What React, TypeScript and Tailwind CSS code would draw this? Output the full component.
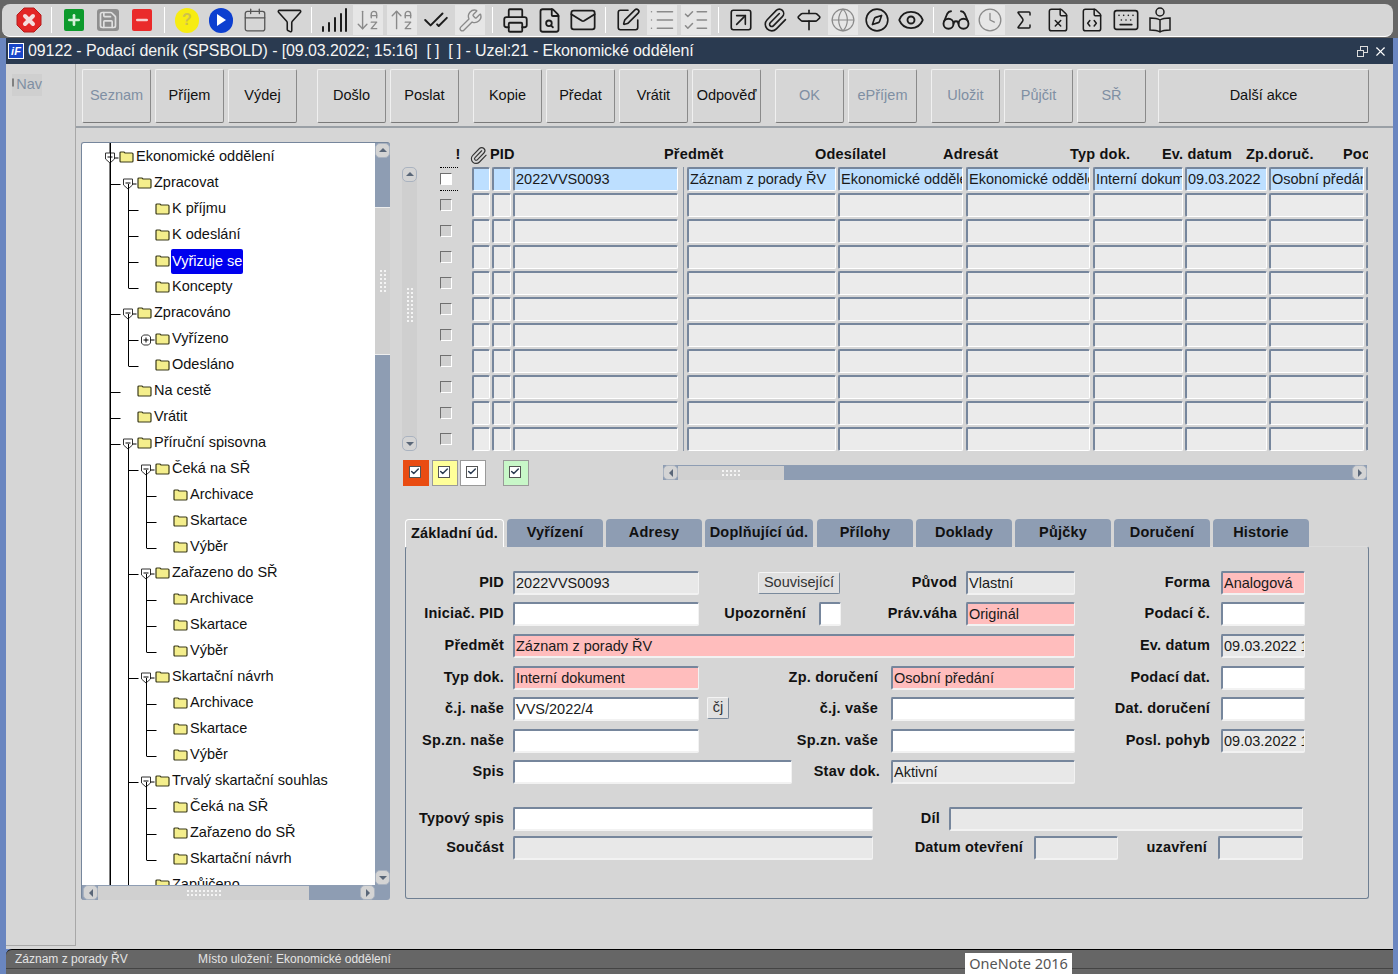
import React from "react";
import {
  Save, Plus, Minus, Calendar, Funnel, ArrowDownAZ, ArrowUpAZ, CheckCheck, Wrench, Printer, FileSearch, Mail, SquarePen,
  List, ListChecks, SquareArrowUpRight, Paperclip, Signpost, Globe, Compass, Eye, Glasses, Clock, Sigma, FileX, FileCode, Keyboard, BookOpen, X, ChevronUp, Check,
} from "lucide-react";

const Sep = () => <div className="w-px h-[26px] mx-[5px] bg-[#9a9a9a] border-r border-white shrink-0" />;

const Ti = ({ children, light }: { children: React.ReactNode; light?: boolean }) => (
  <div className="w-[34px] h-[32px] flex items-center justify-center shrink-0">
    <div className={"w-[30px] h-[30px] flex items-center justify-center " + (light ? "bg-[#e6e6e6] text-[#8a8a8a]" : "text-[#1c1c1c]")}>{children}</div>
  </div>
);

const Signal = () => (
  <svg width="30" height="30" viewBox="0 0 30 30" stroke="#1c1c1c" strokeWidth="2" strokeLinecap="round">
    <path d="M4 26v-4M10 26v-8M16 26v-13M22 26v-17M27 26v-22" />
  </svg>
);

const Toolbar = () => (
  <div className="h-[38px] bg-[#666666] pt-[4px] pl-[2px] pr-[5px] shrink-0">
    <div className="h-[33px] bg-[#d6d6d6] rounded-[8px] border-b border-white flex items-center pl-[10px]">
      <Ti>
        <svg width="28" height="28" viewBox="0 0 28 28"><path d="M9 2h10l7 7v10l-7 7H9l-7-7V9z" fill="#e32626" stroke="#b51c1c" /><path d="M10 10l8 8M18 10l-8 8" stroke="#f4dede" strokeWidth="4" strokeLinecap="round" /></svg>
      </Ti>
      <Sep />
      <Ti><div className="w-[20px] h-[22px] rounded-[2px] bg-[#0d9a2c] flex items-center justify-center"><Plus size={16} strokeWidth={4} className="text-[#d5f0d8]" /></div></Ti>
      <Ti><div className="w-[22px] h-[22px] rounded-[3px] bg-[#8f8f8f] flex items-center justify-center"><Save size={20} className="text-[#e0e0e0]" /></div></Ti>
      <Ti><div className="w-[20px] h-[22px] rounded-[2px] bg-[#ea2a2a] flex items-center justify-center"><Minus size={16} strokeWidth={4} className="text-[#f7cfcf]" /></div></Ti>
      <Sep />
      <Ti><div className="w-[24px] h-[25px] rounded-full bg-[#f7ec12] flex items-center justify-center font-bold text-[16px] text-[#cfc24a]">?</div></Ti>
      <Ti><div className="w-[24px] h-[25px] rounded-full bg-[#0d3fd0] flex items-center justify-center"><svg width="14" height="14" viewBox="0 0 14 14"><path d="M3 1l9 6-9 6z" fill="#fff" /></svg></div></Ti>
      <Ti><Calendar size={26} strokeWidth={1.2} className="text-[#555555]" /></Ti>
      <Ti><Funnel size={27} strokeWidth={1.4} /></Ti>
      <Sep />
      <Ti><Signal /></Ti>
      <Ti light><ArrowDownAZ size={26} strokeWidth={1.3} /></Ti>
      <Ti light><ArrowUpAZ size={26} strokeWidth={1.3} /></Ti>
      <Ti><CheckCheck size={26} strokeWidth={1.8} /></Ti>
      <Ti light><Wrench size={25} strokeWidth={1.3} /></Ti>
      <Sep />
      <Ti><Printer size={27} strokeWidth={1.6} /></Ti>
      <Ti><FileSearch size={27} strokeWidth={1.6} /></Ti>
      <Ti><Mail size={28} strokeWidth={1.5} /></Ti>
      <Sep />
      <Ti><SquarePen size={26} strokeWidth={1.5} /></Ti>
      <Ti light><List size={28} strokeWidth={1.3} /></Ti>
      <Ti light><ListChecks size={28} strokeWidth={1.3} /></Ti>
      <Sep />
      <Ti><SquareArrowUpRight size={26} strokeWidth={1.5} /></Ti>
      <Ti><Paperclip size={26} strokeWidth={1.5} /></Ti>
      <Ti><Signpost size={26} strokeWidth={1.5} /></Ti>
      <Ti light><Globe size={26} strokeWidth={1.1} /></Ti>
      <Ti><Compass size={26} strokeWidth={1.5} /></Ti>
      <Ti><Eye size={28} strokeWidth={1.6} /></Ti>
      <Sep />
      <Ti><Glasses size={30} strokeWidth={1.5} /></Ti>
      <Ti light><Clock size={26} strokeWidth={1.2} /></Ti>
      <Ti><Sigma size={24} strokeWidth={1.5} /></Ti>
      <Ti><FileX size={26} strokeWidth={1.4} /></Ti>
      <Ti><FileCode size={26} strokeWidth={1.4} /></Ti>
      <Ti><Keyboard size={28} strokeWidth={1.4} /></Ti>
      <Ti>
        <svg width="28" height="28" viewBox="0 0 28 28" fill="none" stroke="#1c1c1c" strokeWidth="1.5"><circle cx="14" cy="6" r="4" /><path d="M14 14c-3-2-7-2-10-2v12c3 0 7 0 10 2 3-2 7-2 10-2V12c-3 0-7 0-10 2zM14 14v12" /></svg>
      </Ti>
    </div>
  </div>
);

const Title = () => (
  <div className="h-[26px] bg-[#2a3a50] flex items-center ml-[6px] mr-[5px] shrink-0 text-white">
    <div className="ml-[2px] w-[16px] h-[16px] bg-[#1846c8] border border-white flex items-center justify-center text-[11px] italic font-bold leading-none">iF</div>
    <span className="ml-[4px] text-[16px] tracking-[-0.1px] whitespace-pre text-[#f4f4f4]">09122 - Podací deník (SPSBOLD) - [09.03.2022; 15:16]  [ ]  [ ] - Uzel:21 - Ekonomické oddělení</span>
    <div className="ml-auto flex items-center gap-[5px] pr-[5px]">
      <div className="relative w-[11px] h-[11px]">
        <div className="absolute right-0 top-0 w-[8px] h-[7px] border border-[#dddddd]" />
        <div className="absolute left-0 bottom-0 w-[7px] h-[7px] border border-[#dddddd] bg-[#2a3a50]" />
      </div>
      <X size={15} strokeWidth={1.8} className="text-white" />
    </div>
  </div>
);

const Btn = ({ label, off, w = "w-[69px]" }: { label: string; off?: boolean; w?: string }) => (
  <div className={w + " h-[54px] rounded-[2px] border border-t-[#f0f0f0] border-l-[#f0f0f0] border-r-[#8a8a8a] border-b-[#7a7a7a] bg-[#d6d6d6] flex items-center justify-center text-[14.5px] whitespace-nowrap " + (off ? "text-[#7f8fa3]" : "text-[#111111]")}>{label}</div>
);

const BarSep = () => <div className="w-px self-stretch -mt-[5px] bg-[#a3a3a3] border-r border-white box-content" />;

const ButtonBar = () => (
  <div className="h-[64px] border-b-2 border-b-[#9aa0a6] pt-[5px] pl-[6px] flex shrink-0">
    <div className="flex gap-[4px]"><Btn label="Seznam" off /><Btn label="Příjem" /><Btn label="Výdej" /></div>
    <div className="mx-[9px]"><BarSep /></div>
    <div className="flex gap-[4px]"><Btn label="Došlo" /><Btn label="Poslat" /></div>
    <div className="mx-[6px]"><BarSep /></div>
    <div className="flex gap-[4px]"><Btn label="Kopie" /><Btn label="Předat" /><Btn label="Vrátit" /><Btn label="Odpověď" /></div>
    <div className="mx-[6px]"><BarSep /></div>
    <div className="flex gap-[4px]"><Btn label="OK" off /><Btn label="ePříjem" off /></div>
    <div className="mx-[6px]"><BarSep /></div>
    <div className="flex gap-[4px]"><Btn label="Uložit" off /><Btn label="Půjčit" off /><Btn label="SŘ" off /></div>
    <div className="mx-[5px]"><BarSep /></div>
    <Btn label="Další akce" w="w-[211px]" />
  </div>
);

const Arrow = ({ dir }: { dir: "u" | "d" | "l" | "r" }) => {
  const p = { u: "M2 7l4-4 4 4z", d: "M2 4l4 4 4-4z", l: "M8 2l-4 4 4 4z", r: "M4 2l4 4-4 4z" }[dir];
  return (
    <div className="w-[15px] h-[15px] shrink-0 rounded-[5px] bg-[#d4d4d4] border border-[#aab3c0] flex items-center justify-center">
      <svg width="12" height="12" viewBox="0 0 12 12"><path d={p} fill="#5a6778" /></svg>
    </div>
  );
};

const Grip = ({ v, count }: { v?: boolean; count: number }) => (
  <div className={"flex flex-wrap gap-[2px] " + (v ? "w-[6px]" : "h-[6px] flex-col")}>
    {Array.from({ length: count }).map((_, i) => <div key={i} className="w-[2px] h-[2px] bg-[#f4f4f4]" />)}
  </div>
);

type Node = { t: string; l: number; s?: "-" | "+"; sel?: boolean };
const sub = (a: string[]): Node[] => a.map((t) => ({ t, l: 3 }));
const abc = () => sub(["Archivace", "Skartace", "Výběr"]);
const nodes: Node[] = [
  { t: "Ekonomické oddělení", l: 0, s: "-" },
  { t: "Zpracovat", l: 1, s: "-" },
  { t: "K příjmu", l: 2 },
  { t: "K odeslání", l: 2 },
  { t: "Vyřizuje se", l: 2, sel: true },
  { t: "Koncepty", l: 2 },
  { t: "Zpracováno", l: 1, s: "-" },
  { t: "Vyřízeno", l: 2, s: "+" },
  { t: "Odesláno", l: 2 },
  { t: "Na cestě", l: 1 },
  { t: "Vrátit", l: 1 },
  { t: "Příruční spisovna", l: 1, s: "-" },
  { t: "Čeká na SŘ", l: 2, s: "-" },
  ...abc(),
  { t: "Zařazeno do SŘ", l: 2, s: "-" },
  ...abc(),
  { t: "Skartační návrh", l: 2, s: "-" },
  ...abc(),
  { t: "Trvalý skartační souhlas", l: 2, s: "-" },
  ...sub(["Čeká na SŘ", "Zařazeno do SŘ", "Skartační návrh"]),
  { t: "Zapůjčeno", l: 2 },
];
const pads = ["pl-[37px]", "pl-[55px]", "pl-[73px]", "pl-[91px]"];

const Folder = () => (
  <svg width="15" height="12" viewBox="0 0 15 12" className="shrink-0">
    <path d="M1 3V2q0-1 1-1h3l1 1h7q1 0 1 1v7q0 1-1 1H2q-1 0-1-1z" fill="#f4ee8c" stroke="#3a3a1a" strokeWidth="1.2" />
  </svg>
);

const connectors = () => {
  const rowY = (i: number) => 15 + i * 26;
  const lx = (l: number) => 28 + 18 * l;
  const out: React.ReactNode[] = [];
  out.push(<path key="root" d={`M${lx(0)} 0V760`} stroke="#000" />);
  nodes.forEach((n, i) => {
    if (n.l > 0) {
      const x = lx(n.l - 1) + 0.5;
      let prev = i - 1;
      while (prev >= 0 && nodes[prev].l >= n.l) prev--;
      out.push(<path key={"h" + i} d={`M${x} ${rowY(i) + 0.5}H${x + 10}`} stroke="#000" fill="none" />);
      let p = i - 1;
      while (p >= 0 && nodes[p].l > n.l) p--;
      const from = p >= 0 && nodes[p].l === n.l ? rowY(p) : rowY(prev);
      out.push(<path key={"v" + i} d={`M${x} ${from}V${rowY(i)}`} stroke="#000" fill="none" />);
    }
    if (n.l === 1 || n.l === 2) {
      const last = nodes.findIndex((m, j) => j > i && m.l <= n.l);
      if (n.l === 1 && last === -1) out.push(<path key={"e" + i} d={`M${lx(1) + 0.5} ${rowY(i)}V760M${lx(0) + 0.5} 0V760`} stroke="#000" />);
    }
    if (n.s) {
      const x = lx(n.l);
      out.push(
        <g key={"s" + i} transform={`translate(${x - 4.5} ${rowY(i) - 5})`}>
          <path d={n.s === "-" ? "M0 0h9v6l-4.5 4L0 6z" : "M0 2l2-2h5l2 2v6l-2 2H2L0 8z"} fill="#fff" stroke="#333" />
          <path d={n.s === "-" ? "M2 4h5" : "M2 5h5M4.5 2.5v5"} stroke="#000" />
          <path d="M9 5h4" stroke="#000" />
        </g>
      );
    }
  });
  return out;
};

const Tree = () => (
  <div className="w-[309px] h-[758px] mt-[14px] ml-[5px] shrink-0 bg-[#8e9db3] rounded-[3px] border-t border-l border-t-[#76869c] border-l-[#76869c] flex flex-col overflow-hidden">
    <div className="flex h-[742px]">
      <div className="relative w-[294px] bg-white overflow-hidden pt-[1px]">
        <svg className="absolute left-0 top-0" width="294" height="760">{connectors()}</svg>
        <div className="relative">
          {nodes.map((n, i) => (
            <div key={i} className={"h-[26px] flex items-center gap-[2px] text-[14.5px] text-[#111111] whitespace-nowrap " + pads[n.l]}>
              <Folder />
              {n.sel ? <span className="bg-[#0000ee] text-white h-[25px] leading-[25px] px-[1px] -ml-[1px] rounded-[2px]">{n.t}</span> : <span>{n.t}</span>}
            </div>
          ))}
        </div>
      </div>
      <div className="w-[15px] flex flex-col bg-[#8e9db3]">
        <Arrow dir="u" />
        <div className="mt-[49px] h-[148px] bg-[#d0d0d0] border-y border-[#eeeeee] flex items-center justify-center"><Grip v count={12} /></div>
        <div className="flex-1" />
        <Arrow dir="d" />
      </div>
    </div>
    <div className="h-[15px] flex items-center pl-px pr-[15px]">
      <Arrow dir="l" />
      <div className="w-[211px] h-[14px] bg-[#d0d0d0] flex items-center justify-center"><Grip count={18} /></div>
      <div className="flex-1" />
      <Arrow dir="r" />
    </div>
  </div>
);

const cols = [
  { w: "w-[18px]", ml: "ml-0", h: "!", c: true },
  { w: "w-[19px]", ml: "ml-[2px]", h: "clip", c: true },
  { w: "w-[165px]", ml: "ml-[2px]", h: "PID", v: "2022VVS0093" },
  { w: "w-[149px]", ml: "ml-[3px]", h: "Předmět", v: "Záznam z porady ŘV", sep: true },
  { w: "w-[125px]", ml: "ml-[2px]", h: "Odesílatel", v: "Ekonomické oddělení" },
  { w: "w-[124px]", ml: "ml-[3px]", h: "Adresát", v: "Ekonomické oddělení" },
  { w: "w-[90px]", ml: "ml-[3px]", h: "Typ dok.", v: "Interní dokument" },
  { w: "w-[82px]", ml: "ml-[2px]", h: "Ev. datum", v: "09.03.2022" },
  { w: "w-[95px]", ml: "ml-[2px]", h: "Zp.doruč.", v: "Osobní předání" },
  { w: "w-[25px]", ml: "ml-[2px]", h: "Poc", v: "" },
];

const ColSep = () => <div className="w-px -my-px ml-[5px] bg-[#8a96a6]" />;

const Header = () => (
  <div className="h-[24px] flex pl-[47px] w-[966px] overflow-hidden items-center text-[14.5px] font-bold text-[#111111] tracking-[0.2px]">
    {cols.map((c, i) => (
      <React.Fragment key={i}>
        {c.sep && <div className="w-px ml-[5px]" />}
        <div className={c.w + " " + c.ml + " shrink-0 whitespace-nowrap " + (c.c ? "text-center" : "")}>
          {c.h === "clip" ? <Paperclip size={19} strokeWidth={1.4} className="mx-auto text-[#333333]" /> : c.h}
        </div>
      </React.Fragment>
    ))}
  </div>
);

const RowCheck = ({ on }: { on: boolean }) => (
  <div className={"w-[18px] ml-[23px] h-[24px] flex items-center shrink-0 " + (on ? "border-y border-dotted border-black" : "")}>
    <div className={"w-[12px] h-[12px] border border-t-[#6f6f6f] border-l-[#6f6f6f] border-r-white border-b-white " + (on ? "bg-white" : "bg-[#d0d0d0]")} />
  </div>
);

const Cell = ({ w, ml, v, on }: { w: string; ml: string; v?: string; on: boolean }) => (
  <div className={w + " " + ml + " h-[24px] shrink-0 overflow-hidden rounded-[2px] border-t-2 border-l-2 border-t-[#76869c] border-l-[#76869c] border-b border-r border-b-white border-r-white pl-px text-[14.5px] leading-[21px] whitespace-nowrap text-[#1a1a1a] " + (on ? "bg-[#bddfff]" : "bg-[#ebebeb]")}>{on ? v : ""}</div>
);

const Grid = () => (
  <div className="flex w-[966px] overflow-hidden">
    <div className="w-[15px] h-[284px] shrink-0 flex flex-col bg-[#cfcfcf] rounded-[5px]">
      <Arrow dir="u" />
      <div className="flex-1 flex items-center justify-center -mt-[8px]"><Grip v count={18} /></div>
      <Arrow dir="d" />
    </div>
    <div className="flex flex-col gap-[2px]">
      {Array.from({ length: 11 }).map((_, r) => (
        <div key={r} className="flex h-[24px]">
          <RowCheck on={r === 0} />
          <div className="w-[14px] shrink-0 -ml-[9px] mr-[9px]" />
          {cols.map((c, i) => (
            <React.Fragment key={i}>
              {c.sep && <ColSep />}
              <Cell w={c.w} ml={c.ml} v={c.v} on={r === 0} />
            </React.Fragment>
          ))}
        </div>
      ))}
    </div>
  </div>
);

const Swatch = ({ cls }: { cls: string }) => (
  <div className={"h-[26px] border border-[#9a9a9a] flex items-center justify-center shrink-0 " + cls}>
    <div className="w-[12px] h-[12px] border border-[#555555] bg-white flex items-center justify-center -mt-[3px] -ml-[3px]">
      <Check size={11} strokeWidth={3.5} className="text-[#2a3a50]" />
    </div>
  </div>
);

const SwatchRow = () => (
  <div className="flex mt-[9px] items-start">
    <Swatch cls="w-[26px] ml-px bg-[#e94c12] border-[#e94c12]" />
    <Swatch cls="w-[26px] ml-[3px] bg-[#ffff99]" />
    <Swatch cls="w-[26px] ml-[2px] bg-white" />
    <Swatch cls="w-[26px] ml-[17px] bg-[#c8f7c8]" />
    <div className="ml-[134px] mt-[5px] w-[704px] h-[15px] bg-[#8e9db3] flex items-center">
      <Arrow dir="l" />
      <div className="w-[106px] h-[14px] bg-[#d0d0d0] flex items-center justify-center"><Grip count={10} /></div>
      <div className="flex-1" />
      <Arrow dir="r" />
    </div>
  </div>
);

const tabs = [
  { t: "Základní úd.", w: "w-[99px]", ml: "ml-0", on: true },
  { t: "Vyřízení", w: "w-[96px]", ml: "ml-[3px]" },
  { t: "Adresy", w: "w-[96px]", ml: "ml-[3px]" },
  { t: "Doplňující úd.", w: "w-[108px]", ml: "ml-[3px]" },
  { t: "Přílohy", w: "w-[96px]", ml: "ml-[4px]" },
  { t: "Doklady", w: "w-[96px]", ml: "ml-[3px]" },
  { t: "Půjčky", w: "w-[96px]", ml: "ml-[3px]" },
  { t: "Doručení", w: "w-[96px]", ml: "ml-[3px]" },
  { t: "Historie", w: "w-[96px]", ml: "ml-[3px]" },
];

const Tabs = () => (
  <div className="flex mt-[33px] ml-[3px] h-[27px] relative z-10">
    {tabs.map((t) => (
      <div key={t.t} className={t.w + " " + t.ml + " h-[28px] rounded-t-[4px] flex items-center justify-center text-[14.5px] font-bold tracking-[0.2px] whitespace-nowrap text-[#111111] " + (t.on ? "bg-[#d6d6d6] border-t border-l border-r border-white" : "bg-[#8e9db3] h-[27px]")}>{t.t}</div>
    ))}
  </div>
);

const L = ({ w, t }: { w: string; t: string }) => (
  <div className={w + " h-[24px] flex items-center justify-end text-[14.5px] font-bold tracking-[0.2px] whitespace-nowrap text-[#111111] shrink-0"}>{t}</div>
);

const F = ({ cls, v = "", k = "w" }: { cls: string; v?: string; k?: "w" | "g" | "p" }) => (
  <div className={cls + " h-[24px] shrink-0 overflow-hidden rounded-[2px] border-t-2 border-l-2 border-t-[#76869c] border-l-[#76869c] border-b-2 border-r border-b-[#f2f2f2] border-r-[#f2f2f2] pl-[1px] text-[14.5px] leading-[20px] whitespace-nowrap text-[#1a1a1a] " + (k === "w" ? "bg-white" : k === "g" ? "bg-[#e8e8e8]" : "bg-[#ffbdbd]")}>{v}</div>
);

const B = ({ cls, t }: { cls: string; t: string }) => (
  <div className={cls + " shrink-0 rounded-[2px] bg-[#e0e0e0] border border-t-[#f4f4f4] border-l-[#f4f4f4] border-r-[#7a8a9c] border-b-[#7a8a9c] flex items-center justify-center text-[14.5px] text-[#333333]"}>{t}</div>
);

const Panel = () => (
  <div className="w-[964px] ml-[3px] h-[353px] rounded-[3px] border border-[#6f7f92] border-t-[#dddddd] bg-[#d6d6d6] flex flex-col pl-px pt-[24px]">
    <div className="flex items-center">
      <L w="w-[97px]" t="PID" /><F cls="ml-[9px] w-[186px]" k="g" v="2022VVS0093" />
      <B cls="ml-[59px] w-[82px] h-[22px]" t="Související" />
      <L w="w-[117px]" t="Původ" /><F cls="ml-[9px] w-[109px]" k="g" v="Vlastní" />
      <L w="w-[135px]" t="Forma" /><F cls="ml-[11px] w-[84px]" k="p" v="Analogová" />
    </div>
    <div className="flex mt-[7px]">
      <L w="w-[97px]" t="Iniciač. PID" /><F cls="ml-[9px] w-[186px]" />
      <L w="w-[107px]" t="Upozornění" /><F cls="ml-[13px] w-[22px]" />
      <L w="w-[116px]" t="Práv.váha" /><F cls="ml-[9px] w-[109px]" k="p" v="Originál" />
      <L w="w-[135px]" t="Podací č." /><F cls="ml-[11px] w-[84px]" />
    </div>
    <div className="flex mt-[8px]">
      <L w="w-[97px]" t="Předmět" /><F cls="ml-[9px] w-[562px]" k="p" v="Záznam z porady ŘV" />
      <L w="w-[135px]" t="Ev. datum" /><F cls="ml-[11px] w-[84px]" k="g" v="09.03.2022 15:16" />
    </div>
    <div className="flex mt-[8px]">
      <L w="w-[97px]" t="Typ dok." /><F cls="ml-[9px] w-[186px]" k="p" v="Interní dokument" />
      <L w="w-[179px]" t="Zp. doručení" /><F cls="ml-[13px] w-[184px]" k="p" v="Osobní předání" />
      <L w="w-[135px]" t="Podací dat." /><F cls="ml-[11px] w-[84px]" />
    </div>
    <div className="flex mt-[7px]">
      <L w="w-[97px]" t="č.j. naše" /><F cls="ml-[9px] w-[186px]" v="VVS/2022/4" />
      <B cls="ml-[8px] w-[22px] h-[22px]" t="čj" />
      <L w="w-[149px]" t="č.j. vaše" /><F cls="ml-[13px] w-[184px]" />
      <L w="w-[135px]" t="Dat. doručení" /><F cls="ml-[11px] w-[84px]" />
    </div>
    <div className="flex mt-[8px]">
      <L w="w-[97px]" t="Sp.zn. naše" /><F cls="ml-[9px] w-[186px]" />
      <L w="w-[179px]" t="Sp.zn. vaše" /><F cls="ml-[13px] w-[184px]" />
      <L w="w-[135px]" t="Posl. pohyb" /><F cls="ml-[11px] w-[84px]" k="g" v="09.03.2022 15:16" />
    </div>
    <div className="flex mt-[7px]">
      <L w="w-[97px]" t="Spis" /><F cls="ml-[9px] w-[279px]" />
      <L w="w-[88px]" t="Stav dok." /><F cls="ml-[11px] w-[184px]" k="g" v="Aktivní" />
    </div>
    <div className="flex mt-[23px]">
      <L w="w-[97px]" t="Typový spis" /><F cls="ml-[9px] w-[360px]" />
      <L w="w-[67px]" t="Díl" /><F cls="ml-[9px] w-[354px]" k="g" />
    </div>
    <div className="flex mt-[5px]">
      <L w="w-[97px]" t="Součást" /><F cls="ml-[9px] w-[360px]" k="g" />
      <L w="w-[150px]" t="Datum otevření" /><F cls="ml-[11px] w-[84px]" k="g" />
      <L w="w-[89px]" t="uzavření" /><F cls="ml-[11px] w-[85px]" k="g" />
    </div>
  </div>
);

const Status = () => (
  <div className="relative h-[25px] ml-[6px] mr-[5px] shrink-0 bg-[#666666] rounded-tl-[6px] border-t border-black text-[12px] text-[#e4e4e4] overflow-visible">
    <div className="h-[19px] border-b border-[#444444] flex items-center pl-[9px]">
      <span className="w-[183px]">Záznam z porady ŘV</span>
      <span>Místo uložení: Ekonomické oddělení</span>
    </div>
    <div className="absolute left-[959px] bottom-0 w-[107px] h-[21px] bg-white text-[#555555] text-[14.5px] font-['Noto_Sans',sans-serif] flex items-center justify-center">OneNote 2016</div>
  </div>
);

export default function App() {
  return (
    <div className="w-[1398px] h-[974px] bg-[#6a86c0] flex flex-col overflow-hidden font-['Liberation_Sans',Arial,sans-serif]">
      <Toolbar />
      <Title />
      <div className="flex-1 min-h-0 ml-[6px] mr-[5px] flex bg-[#d6d6d6]">
        <div className="w-[70px] h-[882px] shrink-0 border-r border-b border-[#a8a8a8] pl-[6px] pt-[10px]">
          <div className="flex items-center gap-[2px] text-[14.5px] text-[#7f8fa3] bg-[#cfcfcf] w-[30px]">
            <div className="w-[9px] h-[9px] rounded-full bg-[#f0f0f0] border border-[#808080] -mt-[4px]" />
            Nav
          </div>
        </div>
        <div className="flex-1 min-w-0 flex flex-col">
          <ButtonBar />
          <div className="flex">
            <Tree />
            <div className="ml-[12px] mt-[15px] flex flex-col">
              <Header />
              <Grid />
              <SwatchRow />
              <Tabs />
              <Panel />
            </div>
          </div>
        </div>
      </div>
      <Status />
    </div>
  );
}
